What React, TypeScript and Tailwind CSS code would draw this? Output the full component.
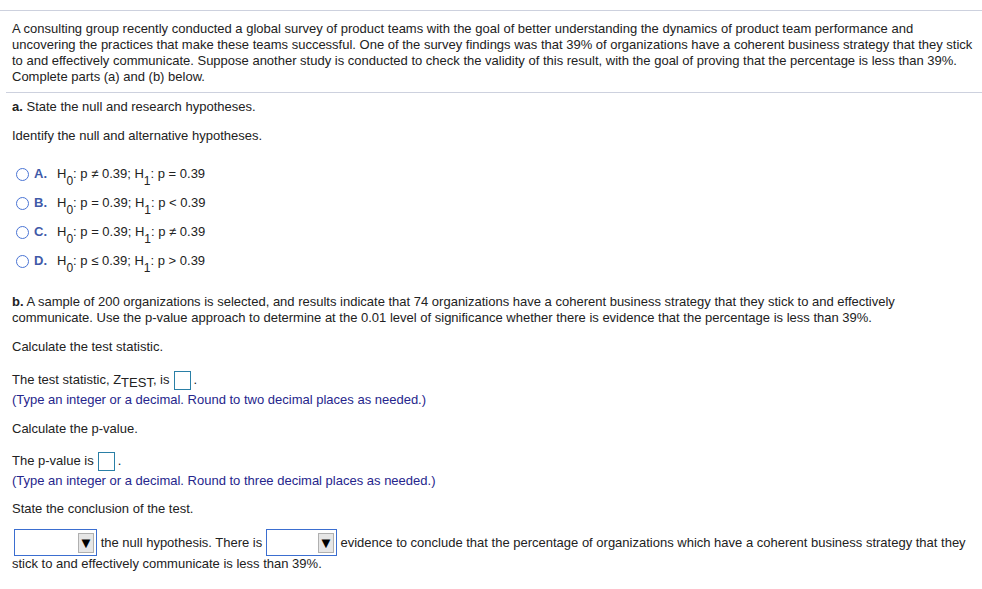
const options = [
  { letter: 'A.', h0: 'p \u2260 0.39', h1: 'p = 0.39' },
  { letter: 'B.', h0: 'p = 0.39', h1: 'p < 0.39' },
  { letter: 'C.', h0: 'p = 0.39', h1: 'p \u2260 0.39' },
  { letter: 'D.', h0: 'p \u2264 0.39', h1: 'p > 0.39' },
];

function AnswerBox() {
  return <span className="inline-block w-[17px] h-[19px] border border-[#2a7fa6] align-middle ml-[4px] mr-[3px] -my-[3px]" />;
}

function Dropdown({ width }: { width: number }) {
  return (
    <span
      className="inline-flex items-center justify-end h-[27px] -my-[6px] relative -top-[1px] border border-[#3b6ed0] bg-white align-middle pr-[2px]"
      style={{ width }}
    >
      <span className="flex items-center justify-center w-[16px] h-[20px] bg-[#e6e6e6] border border-[#b0b0b0] text-[15px] leading-none text-black">
        &#9660;
      </span>
    </span>
  );
}

export default function App() {
  return (
    <div className="w-[982px] h-[589px] bg-white text-[13px] leading-[16px] text-[#222] font-['Liberation_Sans',Arial,sans-serif]">
      <div className="pt-[10px]">
        <div className="border-t border-[#cdd1de]" />
        <p className="px-[12px] pt-[10px] pb-[7px] pr-[6px]">
          A consulting group recently conducted a global survey of product teams with the goal of better understanding the dynamics of product team performance and
          uncovering the practices that make these teams successful. One of the survey findings was that 39% of organizations have a coherent business strategy that they stick
          to and effectively communicate. Suppose another study is conducted to check the validity of this result, with the goal of proving that the percentage is less than 39%.
          Complete parts (a) and (b) below.
        </p>
        <div className="ml-[6px] border-t border-[#cdd1de]" />
      </div>

      <div className="px-[12px]">
        <p className="mt-[6px]">
          <span className="font-bold">a.</span> State the null and research hypotheses.
        </p>
        <p className="mt-[13px]">Identify the null and alternative hypotheses.</p>

        <div className="mt-[22px] flex flex-col gap-[13px]">
          {options.map((o) => (
            <div key={o.letter} className="flex items-center">
              <span className="ml-[4px] w-[13px] h-[13px] rounded-full border-[1.5px] border-[#4a74d4]" />
              <span className="ml-[5px] font-bold text-[#3f5aa8]">{o.letter}</span>
              <span className="ml-[10px]">
                H<sub className="text-[12px] align-[-4px]">0</sub>: {o.h0}; H<sub className="text-[12px] align-[-4px]">1</sub>: {o.h1}
              </span>
            </div>
          ))}
        </div>

        <p className="mt-[25px]">
          <span className="font-bold">b.</span> A sample of 200 organizations is selected, and results indicate that 74 organizations have a coherent business strategy that they stick to and effectively
          communicate. Use the p-value approach to determine at the 0.01 level of significance whether there is evidence that the percentage is less than 39%.
        </p>
        <p className="mt-[13px]">Calculate the test statistic.</p>

        <p className="mt-[17px]">
          The test statistic, Z<span className="relative top-[3px] leading-none">TEST</span>, is
          <AnswerBox />.
        </p>
        <p className="mt-[4px] text-[#26268c]">(Type an integer or a decimal. Round to two decimal places as needed.)</p>
        <p className="mt-[13px]">Calculate the p-value.</p>

        <p className="mt-[16px]">
          The p-value is
          <AnswerBox />.
        </p>
        <p className="mt-[4px] text-[#26268c]">(Type an integer or a decimal. Round to three decimal places as needed.)</p>
        <p className="mt-[12px]">State the conclusion of the test.</p>

        <div className="mt-[15px] leading-[21px]">
          <span className="ml-[2px]">
            <Dropdown width={83} />
          </span>{' '}
          the null hypothesis. There is <Dropdown width={71} /> evidence to conclude that the percentage of organizations which have a coherent business strategy that they
          <br />
          stick to and effectively communicate is less than 39%.
        </div>
      </div>
    </div>
  );
}
